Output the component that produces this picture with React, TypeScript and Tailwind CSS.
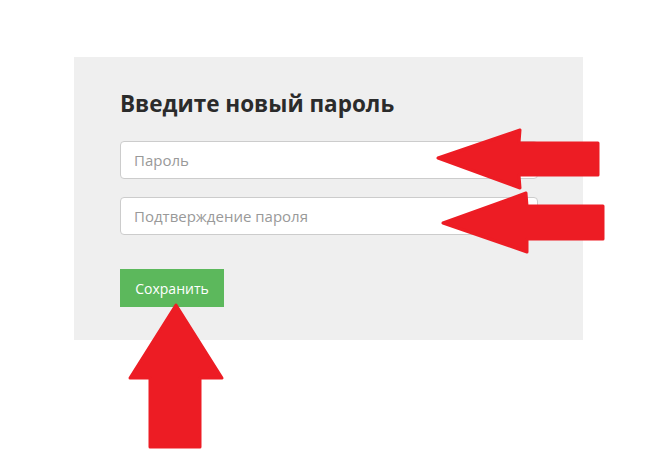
export default function App() {
  return (
    <div className="relative h-[459px] w-[653px] overflow-hidden bg-white" style={{ fontFamily: '"Open Sans", "Liberation Sans", sans-serif' }}>
      <div className="ml-[74px] mt-[57px] h-[283px] w-[509px] bg-[#efefef] pl-[46px] pr-[45px] pt-[32px]">
        <h2 className="text-[22.5px] font-bold leading-[30px] text-[#2b2b2b]">Введите новый пароль</h2>
        <div className="mt-[22px] flex flex-col gap-[18px]">
          <input
            type="password"
            placeholder="Пароль"
            className="h-[38px] w-[418px] rounded-[4px] border border-[#cccccc] bg-white px-[13px] text-[15px] text-[#555] outline-none placeholder:text-[#999]"
          />
          <input
            type="password"
            placeholder="Подтверждение пароля"
            className="h-[38px] w-[418px] rounded-[4px] border border-[#cccccc] bg-white px-[13px] text-[15px] text-[#555] outline-none placeholder:text-[#999]"
          />
        </div>
        <button
          type="button"
          className="mt-[34px] h-[38px] w-[104px] bg-[#5cb85c] text-[14px] text-white"
        >
          Сохранить
        </button>
      </div>

      {/* стрелки поверх скриншота */}
      <svg className="pointer-events-none absolute left-0 top-0" width="653" height="459" viewBox="0 0 653 459">
        <g fill="#ed1c24" stroke="#ed1c24" strokeWidth="3" strokeLinejoin="round">
          <polygon points="438,158 520,130 519,143 598,143 598,175 519,175 520,188" />
          <polygon points="443,223 526,193 527,206 603,206 603,239 527,239 527,252" />
          <polygon points="176,305 222,378 200,378 200,447 150,447 150,378 130,378" />
        </g>
      </svg>
    </div>
  )
}
